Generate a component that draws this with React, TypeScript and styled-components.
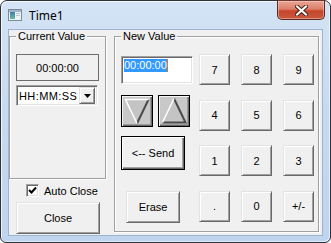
import React from 'react';
import styled, { createGlobalStyle } from 'styled-components';

const GlobalStyle = createGlobalStyle`
  html, body { margin: 0; padding: 0; background: #ffffff; }
  body { font-family: "Liberation Sans", Arial, sans-serif; font-size: 11px; color: #000; }
`;

const KEYS = ['7', '8', '9', '4', '5', '6', '1', '2', '3', '.', '0', '+/-'];

const App: React.FC = () => {
  return (
    <>
      <GlobalStyle />
      <Window>
        <TitleBar>
          <AppIcon width="14" height="12" viewBox="0 0 14 12">
            <defs>
              <linearGradient id="ico" x1="0" y1="0" x2="0" y2="1">
                <stop offset="0" stopColor="#3f7fa8" />
                <stop offset="1" stopColor="#6fb89a" />
              </linearGradient>
            </defs>
            <rect x="0.5" y="0.5" width="13" height="11" fill="#eef2f6" stroke="#7d8b99" />
            <rect x="1" y="1" width="12" height="2" fill="#9fb4c8" />
            <rect x="2" y="3" width="5" height="7" fill="url(#ico)" />
            <rect x="8" y="4" width="4" height="1" fill="#b9c4cf" />
            <rect x="8" y="6" width="4" height="1" fill="#b9c4cf" />
          </AppIcon>
          <Title>Time1</Title>
          <CaptionClose aria-label="Close">
            <svg width="13" height="11" viewBox="0 0 13 11">
              <path d="M2 1.5 L11 9.5 M11 1.5 L2 9.5" stroke="#4a2018" strokeWidth="4" strokeLinecap="square" />
              <path d="M2 1.5 L11 9.5 M11 1.5 L2 9.5" stroke="#ffffff" strokeWidth="2" strokeLinecap="square" />
            </svg>
          </CaptionClose>
        </TitleBar>

        <Client>
          <LeftColumn>
            <Group $width={97} $height={149}>
              <Legend>Current Value</Legend>
              <ValueBox>00:00:00</ValueBox>
              <Combo>
                <ComboText>HH:MM:SS</ComboText>
                <ComboButton>
                  <svg width="7" height="4" viewBox="0 0 7 4">
                    <path d="M0 0 H7 L3.5 4 Z" fill="#000" />
                  </svg>
                </ComboButton>
              </Combo>
            </Group>
            <CheckRow>
              <CheckBox>
                <svg width="9" height="9" viewBox="0 0 9 9">
                  <path d="M1 4 L3.5 6.5 L8 1.5" stroke="#000" strokeWidth="2" fill="none" />
                </svg>
              </CheckBox>
              <span>Auto Close</span>
            </CheckRow>
            <CloseButton>Close</CloseButton>
          </LeftColumn>

          <Group $width={205} $height={202}>
            <Legend>New Value</Legend>
            <NewValueBody>
              <EditPanel>
                <Edit>
                  <Selected>00:00:00</Selected>
                  <Caret />
                </Edit>
                <ArrowRow>
                  <ArrowButton aria-label="Down">
                    <svg width="28" height="28" viewBox="0 0 28 28">
                      <path d="M2.5 2.5 H25.5 L14 26.5 Z" fill="#c4c4c4" />
                      <path d="M14 26.5 L25.5 2.5" stroke="#4a4a4a" strokeWidth="2" fill="none" />
                      <path d="M14 26.5 L2.5 2.5 H25.5" stroke="#ffffff" strokeWidth="1.5" fill="none" />
                    </svg>
                  </ArrowButton>
                  <ArrowButton aria-label="Up">
                    <svg width="28" height="28" viewBox="0 0 28 28">
                      <path d="M14 1.5 L25.5 25.5 H2.5 Z" fill="#c4c4c4" />
                      <path d="M14 1.5 L25.5 25.5 H2.5" stroke="#4a4a4a" strokeWidth="2" fill="none" />
                      <path d="M2.5 25.5 L14 1.5" stroke="#ffffff" strokeWidth="1.5" fill="none" />
                    </svg>
                  </ArrowButton>
                </ArrowRow>
                <SendButton>&lt;-- Send</SendButton>
                <EraseButton>Erase</EraseButton>
              </EditPanel>
              <Keypad>
                {KEYS.map((k) => (
                  <KeyButton key={k}>{k}</KeyButton>
                ))}
              </Keypad>
            </NewValueBody>
          </Group>
        </Client>
      </Window>
    </>
  );
};

const Window = styled.div`
  box-sizing: border-box;
  width: 331px;
  height: 243px;
  border: 1px solid #2d3138;
  border-radius: 7px 7px 6px 6px;
  background: linear-gradient(180deg, #d4e4f6 0%, #c6daf1 45%, #bfd4ee 100%);
  box-shadow: inset 1px 1px 0 rgba(255, 255, 255, 0.75), inset -1px -1px 0 rgba(255, 255, 255, 0.55);
  display: flex;
  flex-direction: column;
`;

const TitleBar = styled.div`
  height: 28px;
  display: flex;
  align-items: flex-start;
  padding-left: 7px;
`;

const AppIcon = styled.svg`
  margin-top: 8px;
  flex: none;
`;

const Title = styled.div`
  margin-left: 7px;
  margin-top: 6px;
  font-family: "Noto Sans", "Open Sans", sans-serif;
  font-size: 12px;
  line-height: 17px;
  color: #000;
`;

const CaptionClose = styled.div`
  box-sizing: border-box;
  margin-left: auto;
  margin-right: 5px;
  margin-top: -1px;
  width: 48px;
  height: 20px;
  border: 1px solid #5b2a22;
  border-top-color: #6b3a30;
  border-radius: 0 0 5px 5px;
  background: linear-gradient(180deg, #e9a796 0%, #dd7e68 45%, #c8452c 55%, #c65a3e 100%);
  box-shadow: inset 0 0 0 1px rgba(255, 220, 210, 0.45);
  display: flex;
  align-items: center;
  justify-content: center;
`;

const Client = styled.div`
  flex: 1;
  margin: 0 7px 6px;
  background: #f0f0f0;
  border: 1px solid #9fb3cf;
  display: flex;
  gap: 8px;
`;

const LeftColumn = styled.div`
  display: flex;
  flex-direction: column;
  width: 97px;
`;

const Group = styled.fieldset<{ $width: number; $height: number }>`
  box-sizing: border-box;
  width: ${(p) => p.$width}px;
  height: ${(p) => p.$height}px;
  margin: 0;
  padding: 11px 0 0 6px;
  min-width: 0;
  border: 1px solid #a0a0a0;
  box-shadow: inset 1px 1px 0 #ffffff, 1px 1px 0 #ffffff;
`;

const Legend = styled.legend`
  padding: 0 2px;
  font-size: 11px;
  line-height: 13px;
  background: #f0f0f0;
`;

const ValueBox = styled.div`
  box-sizing: border-box;
  width: 83px;
  height: 27px;
  border: 1px solid #6d6d6d;
  display: flex;
  align-items: center;
  justify-content: center;
  font-size: 11px;
`;

const sunken = `
  border: 1px solid;
  border-color: #a0a0a0 #ffffff #ffffff #a0a0a0;
  box-shadow: inset 1px 1px 0 #696969, inset -1px -1px 0 #e3e3e3;
`;

const raised = `
  border: 1px solid;
  border-color: #e3e3e3 #696969 #696969 #e3e3e3;
  box-shadow: inset 1px 1px 0 #ffffff, inset -1px -1px 0 #a0a0a0;
`;

const Combo = styled.div`
  box-sizing: border-box;
  margin-top: 4px;
  width: 82px;
  height: 21px;
  background: #ffffff;
  ${sunken}
  display: flex;
  align-items: center;
  padding: 2px;
`;

const ComboText = styled.span`
  flex: 1;
  padding-left: 0;
  font-size: 11px;
  letter-spacing: 0.4px;
  white-space: nowrap;
`;

const ComboButton = styled.span`
  box-sizing: border-box;
  flex: none;
  width: 16px;
  height: 17px;
  background: #f0f0f0;
  ${raised}
  display: flex;
  align-items: center;
  justify-content: center;
`;

const CheckRow = styled.div`
  margin-top: 5px;
  padding-left: 17px;
  height: 13px;
  display: flex;
  align-items: center;
  gap: 5px;
  font-size: 11px;
`;

const CheckBox = styled.span`
  box-sizing: border-box;
  width: 13px;
  height: 13px;
  background: #ffffff;
  ${sunken}
  display: flex;
  align-items: center;
  justify-content: center;
`;

const PushButton = styled.button`
  box-sizing: border-box;
  margin: 0;
  padding: 0;
  font-family: "Liberation Sans", Arial, sans-serif;
  font-size: 11px;
  color: #000;
  background: #f0f0f0;
  ${raised}
  display: flex;
  align-items: center;
  justify-content: center;
`;

const CloseButton = styled(PushButton)`
  margin: 5px 0 0 7px;
  width: 84px;
  height: 32px;
`;

const NewValueBody = styled.div`
  display: flex;
`;

const EditPanel = styled.div`
  width: 78px;
  display: flex;
  flex-direction: column;
  align-items: flex-start;
`;

const Edit = styled.div`
  box-sizing: border-box;
  margin-top: 2px;
  width: 72px;
  height: 28px;
  background: #ffffff;
  ${sunken}
  padding: 2px 0 0 2px;
  display: flex;
  align-items: flex-start;
`;

const Selected = styled.span`
  background: #3399ff;
  color: #ffffff;
  font-size: 11px;
  line-height: 13px;
`;

const Caret = styled.span`
  width: 1px;
  height: 13px;
  background: #e07818;
`;

const ArrowRow = styled.div`
  margin-top: 11px;
  display: flex;
  gap: 5px;
`;

const ArrowButton = styled.button`
  box-sizing: border-box;
  margin: 0;
  padding: 0;
  width: 32px;
  height: 32px;
  border: 1px solid #000;
  background: #c8c8c8;
  box-shadow: inset 1px 1px 0 #f4f4f4, inset -1px -1px 0 #6a6a6a, inset -2px -2px 0 #9a9a9a;
  display: flex;
  align-items: center;
  justify-content: center;
`;

const SendButton = styled(PushButton)`
  margin-top: 9px;
  width: 64px;
  height: 34px;
  border: 1px solid #000;
  box-shadow: inset 1px 1px 0 #ffffff, inset -1px -1px 0 #696969, inset -2px -2px 0 #a0a0a0;
`;

const EraseButton = styled(PushButton)`
  margin: 21px 0 0 5px;
  width: 54px;
  height: 32px;
`;

const Keypad = styled.div`
  display: grid;
  grid-template-columns: repeat(3, 31px);
  grid-auto-rows: 31px;
  column-gap: 11px;
  row-gap: 14.67px;
`;

const KeyButton = styled(PushButton)`
  width: 31px;
  height: 31px;
`;

export default App;
